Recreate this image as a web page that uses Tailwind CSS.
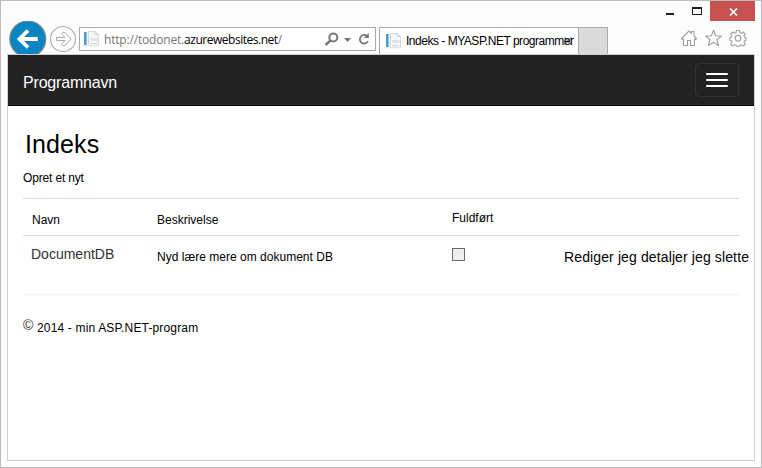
<!DOCTYPE html>
<html lang="da">
<head>
<meta charset="utf-8">
<title>Indeks</title>
<script src="https://cdn.jsdelivr.net/npm/@tailwindcss/browser@4"></script>
</head>
<body class="w-[762px] h-[468px] overflow-hidden font-['Liberation_Sans',Arial,sans-serif] text-black">
<div class="w-[762px] h-[468px] border border-[#bcbcbc] bg-[#fcfcfc] flex flex-col whitespace-nowrap">
  <!-- Window buttons -->
  <div class="h-[20px] shrink-0 flex justify-end pr-[6px]">
    <svg class="w-[45px] h-[20px]" viewBox="0 0 45 20" shape-rendering="crispEdges"><rect x="1" y="12" width="8" height="2" fill="#1e1e1e"/><path d="M27 6h10v8H27z M28 8v5h8V8z" fill="#1e1e1e" fill-rule="evenodd"/></svg>
    <div class="w-[45px] h-[20px] bg-[#c75050] flex items-center justify-center">
      <svg class="w-[9px] h-[8px] mt-px ml-px" viewBox="0 0 9 8"><path d="M1 .5l7 7M8 .5l-7 7" stroke="#fff" stroke-width="1.7"/></svg>
    </div>
  </div>
  <!-- Browser toolbar -->
  <div class="h-[33px] shrink-0 flex overflow-hidden pl-[8px]">
    <svg class="w-[70px] h-[33px] shrink-0" viewBox="9 21 70 33">
      <circle cx="27.8" cy="39" r="18" fill="#0a85c4" stroke="#8a8a8a" stroke-width="1.2"/>
      <path d="M37.8 39H20.500M28 30.500L19.500 39L28 47.500" fill="none" stroke="#fff" stroke-width="3.800"/>
      <circle cx="63" cy="39" r="12.500" fill="#fdfdfd" stroke="#aaa" stroke-width="1.100"/>
      <path d="M56.500 37.500H65L61.500 33.500L62.500 32.500H65L71 39L65 45.500H62.500L61.500 44.500L65 40.500H56.500Z" fill="#fff" stroke="#aaa"/>
    </svg>
    <div class="w-[297px] h-[24px] mt-[6px] border border-[#ababab] bg-white flex items-center shrink-0">
      <svg class="w-[16px] h-[16px] ml-[3px] shrink-0" viewBox="0 0 16 16"><path d="M5.500.5h7l3 3v11h-10z" fill="#f5f7f8" stroke="#d5dade"/><path d="M12 .5v3h3.500M7 12.500h7" stroke="#cbd1d6" fill="none"/><rect x="7" y="7" width="8" height="3" fill="#dfe4ea"/><path d="M3.500 1v14" stroke="#d7e2ea" stroke-width="2"/><rect x="1" y="1" width="2.500" height="13" fill="#4c9bce"/><path d="M0 14.800h15" stroke="#e2e8ec"/></svg>
      <div class="ml-[5px] w-[180px] mt-px text-[12px] leading-[22px] font-['Open_Sans','Noto_Sans',sans-serif] text-[#767676]"><span class="tracking-[-0.180px]">http://todonet.</span><span class="text-black tracking-[-0.480px]">azurewebsites.net</span>/</div>
      <svg class="w-[52px] h-[22px] ml-[38px] shrink-0" viewBox="322 28 52 22">
        <circle cx="333.300" cy="37.500" r="4" fill="none" stroke="#777" stroke-width="2"/><path d="M330.500 40.500L325.500 45" stroke="#777" stroke-width="2.400"/>
        <path d="M344 38h7l-3.500 4z" fill="#777"/>
        <path d="M367.600 36.700A4.300 4.300 0 1 0 368 41.200" fill="none" stroke="#777" stroke-width="1.800"/><path d="M368.800 33v5h-5z" fill="#777"/>
      </svg>
    </div>
    <div class="w-[200px] h-[28px] ml-[3px] mt-[6px] border border-b-0 border-[#ababab] bg-white flex shrink-0 relative">
      <svg class="w-[16px] h-[16px] ml-[5px] mt-[5px] shrink-0" viewBox="0 0 16 16"><path d="M5.500.5h7l3 3v11h-10z" fill="#f5f7f8" stroke="#d5dade"/><path d="M12 .5v3h3.500M7 12.500h7" stroke="#cbd1d6" fill="none"/><rect x="7" y="7" width="8" height="3" fill="#dfe4ea"/><path d="M3.500 1v14" stroke="#d7e2ea" stroke-width="2"/><rect x="1" y="1" width="2.500" height="13" fill="#4c9bce"/><path d="M0 14.800h15" stroke="#e2e8ec"/></svg>
      <svg class="absolute left-[184px] top-[9px] w-[8px] h-[8px]" viewBox="0 0 8 8"><path d="M.5.5l7 7M7.500.5l-7 7" stroke="#999" stroke-width="1.700"/></svg>
      <div class="relative ml-[5px] text-[12px] leading-[26px] tracking-[-0.480px]">Indeks - MYASP.NET programmer</div>
    </div>
    <div class="w-[29px] h-[28px] mt-[6px] border border-l-0 border-b-0 border-[#ababab] bg-[#dadada] shrink-0"></div>
    <svg class="w-[70px] h-[20px] ml-[72px] mt-[7px] shrink-0" viewBox="680 28 70 20" fill="#fff" stroke="#a0a0a0" stroke-width="1.100" stroke-linejoin="round">
      <path d="M681.500 38.500L689 31L691.500 33.500V31.500H694V36L696.500 38.500L695.500 39.500L694.500 38.800V45.500H690.500V40.500H687.500V45.500H683.500V38.800L682.500 39.500Z"/>
      <path d="M713.500 30.300L715.600 35.800L721.400 36.100L716.900 39.700L718.500 45.500L713.500 42.200L708.500 45.500L710.100 39.700L705.600 36.100L711.400 35.800Z"/>
      <path d="M736.500 30.500h3l.5 2.300 1.200.5 2-1.300 2.100 2.100-1.300 2 .5 1.200 1.500.2v3l-1.500.3-.5 1.200 1.300 2-2.100 2.100-2-1.300-1.200.5-.5 1h-3l-.5-1-1.200-.5-2 1.300-2.100-2.100 1.300-2-.5-1.200-1.500-.3v-3l1.500-.2.5-1.200-1.300-2 2.100-2.100 2 1.300 1.200-.5z"/><circle cx="738" cy="38.200" r="2.800"/>
    </svg>
  </div>
  <!-- Page -->
  <main class="mx-[6px] h-[407px] border border-[#cfcfcf] bg-white flex flex-col shrink-0">
    <nav class="h-[51px] shrink-0 bg-[#222] border-b border-[#080808] flex items-center justify-between pl-[15px] pr-[15px]">
      <div class="text-[16px] leading-[20px] mt-[6px] text-white tracking-[-0.180px]">Programnavn</div>
      <div class="w-[44px] h-[34px] rounded-[4px] border border-[#333] flex flex-col items-center justify-center gap-[4px]">
        <div class="w-[22px] h-[2px] rounded-[1px] bg-white"></div><div class="w-[22px] h-[2px] rounded-[1px] bg-white"></div><div class="w-[22px] h-[2px] rounded-[1px] bg-white"></div>
      </div>
    </nav>
    <div class="px-[15px] flex flex-col text-[12px] leading-[14px]">
      <h1 class="mt-[23px] ml-[2px] text-[25px] leading-[30px] tracking-[0.100px]">Indeks</h1>
      <p class="mt-[12px] h-[14px] tracking-[-0.160px]">Opret et nyt</p>
      <div class="mt-[13px] h-[38px] border-y border-[#ddd] grid grid-cols-[134px_295px_112px_1fr]">
        <div class="pl-[9px] pt-[14px]">Navn</div>
        <div class="pt-[14px]">Beskrivelse</div>
        <div class="pt-[12px]">Fuldført</div>
      </div>
      <div class="h-[58px] grid grid-cols-[134px_295px_112px_1fr]">
        <div class="pl-[8px] pt-[10px] text-[14px] leading-[16px] text-[#333]">DocumentDB</div>
        <div class="pt-[14px] tracking-[0.020px]">Nyd lære mere om dokument DB</div>
        <div class="pt-[12px]"><div class="w-[13px] h-[13px] border border-[#6b6b6b] bg-[#efefef]"></div></div>
        <div class="pt-[13px] text-[14px] leading-[16px] tracking-[0.120px]">Rediger jeg detaljer jeg slette</div>
      </div>
      <footer class="border-t border-[#eee] flex">
        <span class="pt-[22px] text-[14px] leading-[16px] w-[14px] text-[#333]">©</span>
        <span class="pt-[26px] tracking-[0.160px]">2014 - min ASP.NET-program</span>
      </footer>
    </div>
  </main>
</div>
</body>
</html>
